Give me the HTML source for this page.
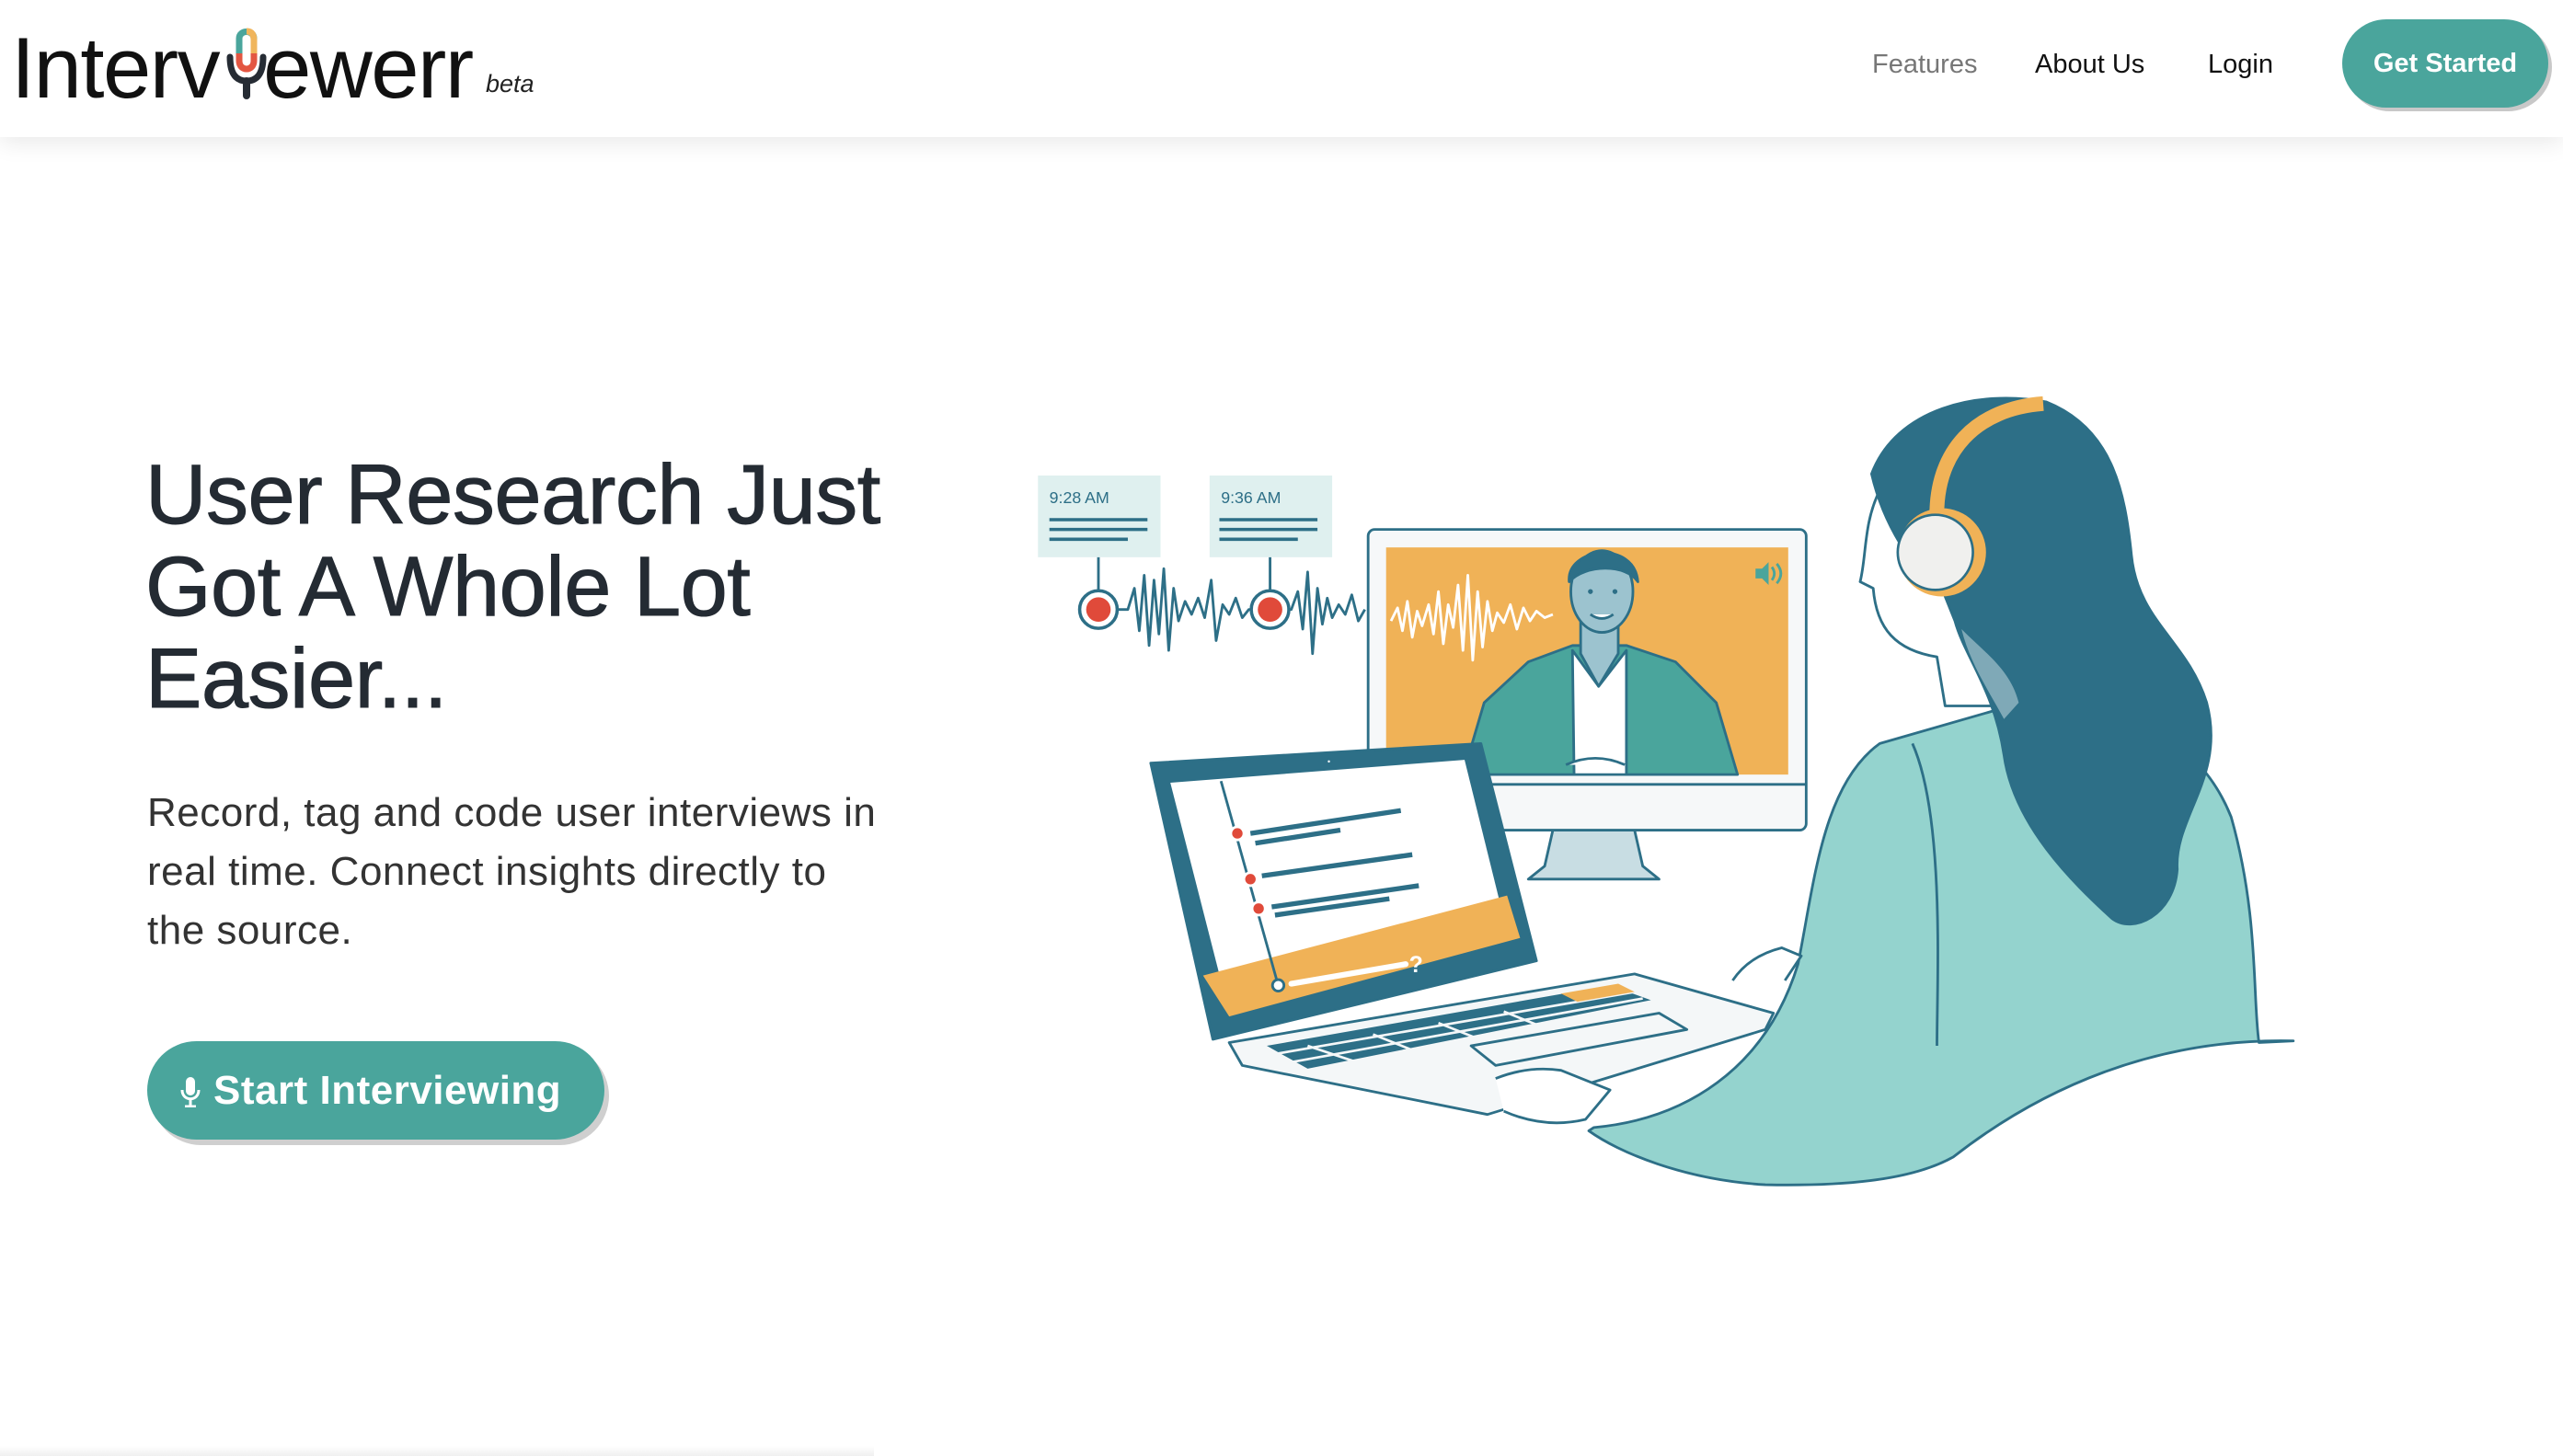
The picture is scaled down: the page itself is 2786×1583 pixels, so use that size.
<!DOCTYPE html>
<html><head><meta charset="utf-8"><style>
*{margin:0;padding:0;box-sizing:border-box}
body{width:2786px;height:1583px;background:#fff;position:relative;overflow:hidden;font-family:"Liberation Sans",sans-serif}
header{position:absolute;left:0;top:0;width:2786px;height:149px;background:#fff;box-shadow:0 6px 24px rgba(0,0,0,0.09);z-index:2}
.logo{position:absolute;left:12px;top:20px;font-size:94px;color:#111;letter-spacing:-1.5px;white-space:nowrap}
.beta{position:absolute;left:528px;top:76px;font-size:27px;font-style:italic;color:#222}
.nav{position:absolute;top:54px;font-size:29px;color:#111}
.btn1{position:absolute;left:2546px;top:21px;width:224px;height:96px;border-radius:48px;background:#4aa59c;color:#fff;font-weight:bold;font-size:29px;line-height:96px;text-align:center;box-shadow:4px 4px 0 #c8c8c8}
h1{position:absolute;left:158px;top:488px;font-size:92px;line-height:100px;font-weight:normal;color:#242b33;letter-spacing:-0.5px;white-space:nowrap;-webkit-text-stroke:1px #242b33}
p.lead{position:absolute;left:160px;top:852px;font-size:44px;line-height:64px;color:#333;white-space:nowrap;letter-spacing:0.5px}
.btn2{position:absolute;left:160px;top:1132px;width:497px;height:107px;border-radius:54px;background:#4aa59c;color:#fff;font-weight:bold;font-size:44px;line-height:107px;box-shadow:5px 6px 0 #cfcfcf;padding-left:72px;letter-spacing:0.5px}
svg.ill{position:absolute;left:0;top:0}
</style></head><body>
<header>
<div class="logo">Interv<span style="display:inline-block;width:48px"></span>ewerr</div>
<svg style="position:absolute;left:238px;top:30px" width="60" height="80" viewBox="0 0 60 80">
<path d="M12,32 C12,52 20,58 30,58 C40,58 48,52 48,32" fill="none" stroke="#262c34" stroke-width="7" stroke-linecap="round"/>
<line x1="30" y1="58" x2="30" y2="74" stroke="#262c34" stroke-width="8" stroke-linecap="round"/>
<path d="M22,30 L22,12 C22,2 38,2 38,12 L38,30" fill="none" stroke="#4aa59c" stroke-width="7"/>
<path d="M30,4 C36,4 38,8 38,14 L38,28" fill="none" stroke="#f0b55c" stroke-width="7"/>
<path d="M22,28 L22,36 C22,48 38,48 38,36 L38,28" fill="none" stroke="#e35642" stroke-width="7"/>
</svg>
<div class="beta">beta</div>
<div class="nav" style="left:2035px;color:#777">Features</div>
<div class="nav" style="left:2212px">About Us</div>
<div class="nav" style="left:2400px">Login</div>
<div class="btn1">Get Started</div>
</header>
<h1>User Research Just<br>Got A Whole Lot<br>Easier...</h1>
<p class="lead">Record, tag and code user interviews in<br>real time. Connect insights directly to<br>the source.</p>
<div class="btn2"><svg style="position:absolute;left:36px;top:38px" width="22" height="34" viewBox="0 0 22 34"><rect x="6" y="1" width="10" height="20" rx="5" fill="#fff"/><path d="M2,15 C2,28 20,28 20,15" fill="none" stroke="#fff" stroke-width="3"/><line x1="11" y1="26" x2="11" y2="33" stroke="#fff" stroke-width="3"/><line x1="5" y1="33" x2="17" y2="33" stroke="#fff" stroke-width="3"/></svg>Start Interviewing</div>

<svg class="ill" width="2786" height="1583" viewBox="0 0 1568 891" preserveAspectRatio="none">
<g stroke="#2d6f87" stroke-width="1.6" stroke-linejoin="round">
<rect x="635" y="291" width="75" height="50" fill="#dff0ef" stroke="none"/>
<rect x="740" y="291" width="75" height="50" fill="#dff0ef" stroke="none"/>
<text x="642" y="308" font-size="10" fill="#2d6f87" stroke="none" font-family="Liberation Sans">9:28 AM</text>
<text x="747" y="308" font-size="10" fill="#2d6f87" stroke="none" font-family="Liberation Sans">9:36 AM</text>
<path d="M642,318H702M642,324H702M642,330H690M746,318H806M746,324H806M746,330H794" stroke-width="2"/>
<path d="M672,341V362M777,341V362"/>
<path fill="none" d="M660,373 H690 L694,360 697,386 700,352 703,395 706,355 709,388 712,348 715,398 718,360 721,380 725,368 729,376 733,366 737,378 741,355 744,392 748,370 752,376 756,366 760,378 764,373 H790 L794,362 797,385 800,350 803,400 806,360 809,382 812,366 815,378 819,370 823,376 827,364 831,380 835,373"/>
<circle cx="672" cy="373" r="11.5" fill="#fff" stroke-width="2"/><circle cx="672" cy="373" r="7.5" fill="#e04a3a" stroke="none"/>
<circle cx="777" cy="373" r="11.5" fill="#fff" stroke-width="2"/><circle cx="777" cy="373" r="7.5" fill="#e04a3a" stroke="none"/>
<path d="M950,508 L945,530 L935,538 L1015,538 L1005,530 L1000,508Z" fill="#c8dde3"/>
<rect x="837" y="324" width="268" height="184" rx="4" fill="#f6f8f9"/>
<line x1="837" y1="480" x2="1105" y2="480"/>
<rect x="848" y="335" width="246" height="139" fill="#f0b257" stroke="none"/>
<path fill="none" stroke="#fff" d="M851,380 L855,372 858,386 861,368 864,390 867,374 870,383 874,370 877,388 880,362 883,394 886,370 889,384 892,358 895,398 898,352 901,404 904,362 907,396 910,368 913,386 916,375 920,381 924,370 928,385 932,372 936,380 940,374 945,378 950,376"/>
<path d="M1074,348h4l4,-4v14l-4,-4h-4z" fill="#4aa59c" stroke="none"/>
<path d="M1084,347 q3,4 0,8 M1087,345 q5,6 0,12" fill="none" stroke="#4aa59c"/>
<path d="M895,474 L908,430 L935,405 L962,395 L995,395 L1025,405 L1050,430 L1063,474Z" fill="#4aa59c"/>
<path d="M962,398 L978,420 L995,398 L995,474 L963,474Z" fill="#fff"/>
<path d="M967,380 L967,400 L978,420 L990,400 L990,380Z" fill="#9cc3cf"/>
<ellipse cx="980" cy="362" rx="19" ry="25" fill="#9cc3cf"/>
<path d="M960,356 C958,335 1000,330 1002,356 C995,345 970,345 960,356Z" fill="#2d6f87"/>
<circle cx="973" cy="362" r="1.5" fill="#2d6f87" stroke="none"/><circle cx="988" cy="362" r="1.5" fill="#2d6f87" stroke="none"/>
<path d="M973,376 q7,5 14,0" fill="#fff"/>
<path d="M958,468 q18,-8 36,0" fill="#fff"/>
<path d="M752,638 L1000,596 L1085,620 L1080,630 L910,682 L760,652Z" fill="#f4f7f8"/>
<path d="M775,640 L985,603 L1010,612 L800,654Z" fill="#2d6f87" stroke="none"/>
<path d="M780,645 L1000,607 M790,650 L1005,611 M800,640 L830,650 M840,633 L870,645 M880,626 L910,638 M920,619 L950,631" stroke="#f4f7f8" stroke-width="1.5"/>
<path d="M955,608 L990,602 L1000,607 L965,613Z" fill="#f0b257" stroke="none"/>
<path d="M900,640 L1015,620 L1032,630 L915,652Z" fill="none"/>
<path d="M704,467 L906,455 L940,588 L742,636Z" fill="#2d6f87"/>
<path d="M716,479 L896,465 L922,570 L750,612Z" fill="#fff" stroke="none"/>
<path d="M736,597 L922,548 L930,574 L752,622Z" fill="#f0b257" stroke="none"/>
<path d="M747,478 L782,603" fill="none"/>
<path d="M765,510 L857,496 M768,516 L820,508 M772,536 L864,523 M778,555 L868,542 M780,560 L850,550" stroke-width="3"/>
<path d="M790,602 L860,590" stroke="#fff" stroke-width="3.5" stroke-linecap="round"/>
<text x="862" y="595" font-size="14" font-weight="bold" fill="#fff" stroke="none" font-family="Liberation Sans">?</text>
<circle cx="757" cy="510" r="4" fill="#e04a3a" stroke="#fff"/><circle cx="765" cy="538" r="4" fill="#e04a3a" stroke="#fff"/><circle cx="770" cy="556" r="4" fill="#e04a3a" stroke="#fff"/><circle cx="782" cy="603" r="3.5" fill="#fff"/>
<circle cx="813" cy="466" r="1.5" fill="#fff"/>
<path d="M975,690 C1030,685 1080,655 1100,590 C1110,540 1115,480 1150,455 L1230,432 C1300,430 1345,450 1365,500 C1382,560 1378,610 1382,638 L1403,637 C1320,635 1250,665 1195,708 C1170,722 1130,726 1080,725 C1030,722 990,705 972,692Z" fill="#94d3ce"/>
<path d="M1170,455 C1190,500 1185,600 1185,640" fill="none"/>
<path d="M1060,600 q10,-15 30,-20 l12,5 -10,15" fill="#fff"/>
<path d="M915,660 q20,-8 40,-5 l30,12 -15,18 q-25,6 -50,-5" fill="#fff"/>
<path d="M1150,300 C1140,320 1142,340 1138,356 L1146,360 C1148,385 1160,398 1185,402 L1190,432 L1230,432 L1225,380 L1200,320Z" fill="#fff"/>
<path d="M1145,290 C1160,250 1210,238 1252,246 C1292,262 1300,300 1304,340 C1308,380 1338,392 1350,430 C1362,475 1330,500 1332,532 C1330,560 1305,572 1292,562 C1268,540 1232,505 1226,462 C1220,422 1202,402 1196,380 L1188,360 C1170,350 1152,320 1145,290Z" fill="#2d6f87"/>
<path d="M1200,385 C1215,400 1230,410 1235,430 L1226,440 C1215,420 1205,405 1200,385Z" fill="#7fa9b7" stroke="none"/>
<path d="M1185,320 C1183,275 1210,250 1250,247" fill="none" stroke="#f0b257" stroke-width="9"/>
<circle cx="1188" cy="338" r="27" fill="#f0b257" stroke="none"/>
<circle cx="1184" cy="338" r="23" fill="#f0f0ee" stroke="#2d6f87" stroke-width="1.5"/>
</g>
</svg>
<div style="position:absolute;left:0;top:1572px;width:950px;height:11px;background:linear-gradient(#fff,#f0f0f0)"></div>
</body></html>
